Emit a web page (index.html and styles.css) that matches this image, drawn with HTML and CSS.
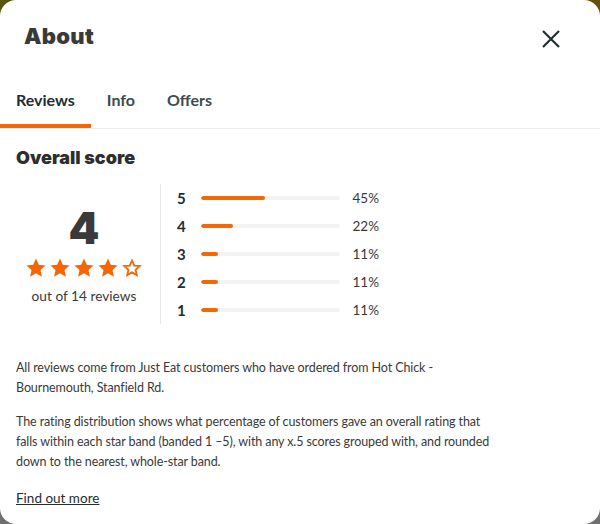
FILE: index.html
```html
<!DOCTYPE html>
<html lang="en">
<head>
<meta charset="utf-8">
<title>About</title>
<link rel="stylesheet" href="styles.css">
</head>
<body>
<div class="modal">
  <header class="modal-header">
    <h1 class="modal-title">About</h1>
    <button class="close" aria-label="Close">
      <svg width="24" height="24" viewBox="0 0 24 24"><path d="M4 4 L20 20 M20 4 L4 20" stroke="#242e30" stroke-width="2.2" fill="none"/></svg>
    </button>
  </header>
  <nav class="tabs">
    <div class="tab active">Reviews</div>
    <div class="tab">Info</div>
    <div class="tab">Offers</div>
  </nav>
  <section class="content">
    <h2 class="section-title">Overall score</h2>
    <div class="score">
      <div class="score-left">
        <div class="big">4</div>
        <div class="stars">
          <svg width="20" height="20" viewBox="0 0 24 24"><path class="s-full" d="M12 0.5l3.4 7.6 8.1.8-6.1 5.4 1.8 8.1L12 18.3l-7.2 4.1 1.8-8.1L0.5 8.9l8.1-.8z"/></svg>
          <svg width="20" height="20" viewBox="0 0 24 24"><path class="s-full" d="M12 0.5l3.4 7.6 8.1.8-6.1 5.4 1.8 8.1L12 18.3l-7.2 4.1 1.8-8.1L0.5 8.9l8.1-.8z"/></svg>
          <svg width="20" height="20" viewBox="0 0 24 24"><path class="s-full" d="M12 0.5l3.4 7.6 8.1.8-6.1 5.4 1.8 8.1L12 18.3l-7.2 4.1 1.8-8.1L0.5 8.9l8.1-.8z"/></svg>
          <svg width="20" height="20" viewBox="0 0 24 24"><path class="s-full" d="M12 0.5l3.4 7.6 8.1.8-6.1 5.4 1.8 8.1L12 18.3l-7.2 4.1 1.8-8.1L0.5 8.9l8.1-.8z"/></svg>
          <svg width="20" height="20" viewBox="0 0 24 24"><path class="s-empty" d="M12 3l2.7 6.1 6.6.6-5 4.4 1.5 6.5L12 17.3l-5.8 3.3 1.5-6.5-5-4.4 6.6-.6z"/></svg>
        </div>
        <div class="count">out of 14 reviews</div>
      </div>
      <div class="score-right">
        <div class="row"><span class="lbl">5</span><span class="bar"><span class="fill" style="width:46%"></span></span><span class="pct">45%</span></div>
        <div class="row"><span class="lbl">4</span><span class="bar"><span class="fill" style="width:23%"></span></span><span class="pct">22%</span></div>
        <div class="row"><span class="lbl">3</span><span class="bar"><span class="fill" style="width:12%"></span></span><span class="pct">11%</span></div>
        <div class="row"><span class="lbl">2</span><span class="bar"><span class="fill" style="width:12%"></span></span><span class="pct">11%</span></div>
        <div class="row"><span class="lbl">1</span><span class="bar"><span class="fill" style="width:12%"></span></span><span class="pct">11%</span></div>
      </div>
    </div>
    <p class="text">All reviews come from Just Eat customers who have ordered from Hot Chick - Bournemouth, Stanfield Rd.</p>
    <p class="text">The rating distribution shows what percentage of customers gave an overall rating that falls within each star band (banded 1 –5), with any x.5 scores grouped with, and rounded down to the nearest, whole-star band.</p>
    <a class="more" href="#">Find out more</a>
  </section>
</div>
</body>
</html>
```
FILE: styles.css
```css
* { box-sizing: border-box; }
html, body { margin: 0; padding: 0; }
body {
  width: 600px;
  height: 524px;
  background: linear-gradient(90deg, #56550c 0%, #6a4c0c 100%);
  font-family: Lato, "Noto Sans", "Liberation Sans", sans-serif;
  color: #242e30;
  overflow: hidden;
}
.modal {
  width: 600px;
  height: 524px;
  background: #fff;
  border-radius: 16px;
  overflow: hidden;
  position: relative;
  box-shadow: 0 20px 0 #707070;
}
.modal-header {
  display: flex;
  justify-content: space-between;
  align-items: flex-start;
  padding: 22px 37px 0 24px;
  height: 76px;
}
.modal-title {
  margin: 0;
  font-family: Inter, Lato, sans-serif;
  font-weight: 900;
  font-size: 22px;
  line-height: 28px;
  letter-spacing: 0.3px;
  color: #3a3a3a;
}
.close {
  border: 0;
  background: none;
  padding: 0;
  margin-top: 5px;
  width: 24px;
  height: 24px;
  cursor: pointer;
}
.close svg { display: block; }
.tabs {
  display: flex;
  border-bottom: 1px solid #ececec;
}
.tab {
  padding: 12px 16px 0;
  height: 52px;
  font-size: 16px;
  line-height: 24px;
  font-weight: 700;
  color: #3c4b4e;
  border-bottom: 4px solid transparent;
}
.tab.active {
  color: #242e30;
  border-bottom-color: #f36805;
}
.content {
  padding: 17px 16px 0;
}
.section-title {
  margin: 0;
  font-family: Inter, Lato, sans-serif;
  font-weight: 900;
  font-size: 18px;
  line-height: 24px;
  color: #2e2e2e;
}
.score {
  display: flex;
  margin-top: 14px;
}
.score-left {
  width: 136px;
  margin-right: 8px;
  display: flex;
  flex-direction: column;
  align-items: center;
  padding-top: 20px;
}
.big {
  font-family: Inter, Lato, sans-serif;
  font-weight: 900;
  font-size: 44px;
  line-height: 48px;
  color: #3a3a3a;
}
.stars {
  display: flex;
  gap: 4px;
  margin-top: 6px;
}
.stars svg { display: block; }
.s-full { fill: #f36805; }
.s-empty { fill: #fff; stroke: #f36805; stroke-width: 2.2; stroke-linejoin: miter; }
.count {
  margin-top: 8px;
  font-size: 13.7px;
  line-height: 20px;
  color: #3a3a3a;
}
.score-right {
  border-left: 1px solid #e8e8e8;
  padding: 0 0 0 16px;
}
.row {
  display: flex;
  align-items: center;
  height: 28px;
}
.lbl {
  width: 24px;
  font-size: 15px;
  font-weight: 700;
  color: #242e30;
}
.bar {
  width: 139px;
  height: 4px;
  border-radius: 2px;
  background: #f5f3f1;
  overflow: hidden;
}
.fill {
  display: block;
  height: 100%;
  background: #f36805;
  border-radius: 2px;
}
.pct {
  width: 39px;
  text-align: right;
  font-size: 13.5px;
  color: #3a3a3a;
}
.text {
  margin: 34px 0 0;
  font-size: 12.5px;
  letter-spacing: -0.1px;
  line-height: 20px;
  color: #3a3a3a;
  width: 485px;
}
.text + .text { margin-top: 14px; }
.more {
  display: inline-block;
  margin-top: 16px;
  font-size: 13.5px;
  line-height: 20px;
  color: #242e30;
  text-decoration: underline;
}
```
